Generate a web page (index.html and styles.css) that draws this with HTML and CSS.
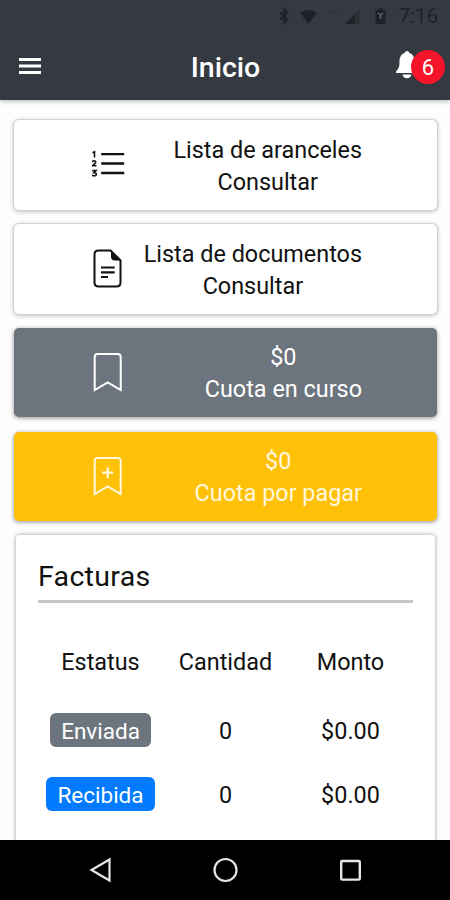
FILE: index.html
```html
<!DOCTYPE html>
<html lang="es">
<head>
<meta charset="utf-8">
<title>Inicio</title>
<link rel="stylesheet" href="styles.css">
</head>
<body>
<header class="header">
  <div class="status">
    <svg class="status-icons" width="110" height="24" viewBox="0 0 110 24">
      <path d="M2 8L9.500 15.500 6 19V5l3.500 3.500L2 16" fill="none" stroke="#1e2228" stroke-width="1.800"/>
      <path d="M22 9q9-6 17 0l-8.500 11z" fill="#1e2228"/>
      <path d="M51 8h8" stroke="#303339" stroke-width="2"/>
      <path d="M82 5v15H67z" fill="#2c3035"/><path d="M77 10v10H67z" fill="#1e2228"/>
      <path d="M97.500 6h3V4h4v2h3v14h-10z" fill="#1e2228"/>
      <path d="M100 9l2.500 2L105 9M102.500 11v4" fill="none" stroke="#59606a" stroke-width="1.500"/>
    </svg>
    <span class="clock">7:16</span>
  </div>
  <div class="toolbar">
    <svg class="menu" width="22" height="18" viewBox="0 0 22 18"><path d="M0 2.500h22M0 9h22M0 15.500h22" stroke="#fff" stroke-width="3.200"/></svg>
    <h1 class="title">Inicio</h1>
    <div class="alerts">
      <svg width="24" height="30" viewBox="0 0 24 30"><path d="M13 1c-1.500 0-2.200 1-2.200 2C6.500 4.200 5.500 8 5.500 12c0 5-.8 6.500-3.500 9.500V23h22v-1.500C21.300 18.500 20.500 17 20.500 12c0-4-1-7.800-5.300-9 0-1-.7-2-2.200-2zM8.500 24.500h9c-.5 2.500-2.300 3.800-4.500 3.800s-4-1.300-4.500-3.800z" fill="#fff"/></svg>
      <span class="count">6</span>
    </div>
  </div>
</header>
<main class="content">
  <section class="card">
    <svg class="icon" width="36" height="40" viewBox="0 0 36 40">
      <g fill="none" stroke="#111">
        <path d="M9.200 10.200h23M9.200 19.500h23M9.200 29h23" stroke-width="2.300"/>
        <g stroke-width="1.600">
          <path d="M.5 8.800l2-1v5.700"/>
          <path d="M.3 18.200q.2-1.400 1.800-1.400c2 0 2 1.700.7 2.800L.5 21.700h4"/>
          <path d="M.3 26.600H4l-2 2.100c3.300-.2 2.700 3.100.3 3.100q-1.500 0-2.200-.9"/>
        </g>
      </g>
    </svg>
    <p class="label">Lista de aranceles<br>Consultar</p>
  </section>
  <section class="card">
    <svg class="icon" width="36" height="40" viewBox="0 0 36 40">
      <path d="M6.500 2.500h12l10 10v22q0 4-4 4h-18q-4 0-4-4v-28q0-4 4-4z" fill="none" stroke="#111" stroke-width="2"/>
      <path d="M19 2L29 12.500h-6q-4 0-4-4z" fill="#111"/>
      <path d="M9 19.500h13.700M9 24.300h13.700M9 29h7" stroke="#111" stroke-width="2.200"/>
    </svg>
    <p class="label">Lista de documentos<br>Consultar</p>
  </section>
  <section class="card card-gray">
    <svg class="icon" width="36" height="40" viewBox="0 0 36 40"><path d="M2.700 38V5q0-3 3-3h20q3 0 3 3v33l-13-7.500z" fill="none" stroke="#fff" stroke-width="2"/></svg>
    <p class="label">$0<br>Cuota en curso</p>
  </section>
  <section class="card card-yellow">
    <svg class="icon" width="36" height="40" viewBox="0 0 36 40"><path d="M2.700 38V5q0-3 3-3h20q3 0 3 3v33l-13-7.500z" fill="none" stroke="#fff8df" stroke-width="2"/><path d="M10.200 16.700h11M15.700 11.200v11" stroke="#fff8df" stroke-width="2.200"/></svg>
    <p class="label">$0<br>Cuota por pagar</p>
  </section>
  <section class="panel">
    <h2 class="heading">Facturas</h2>
    <div class="table">
      <span>Estatus</span><span>Cantidad</span><span>Monto</span>
      <span class="tag">Enviada</span><span>0</span><span>$0.00</span>
      <span class="tag tag-blue">Recibida</span><span>0</span><span>$0.00</span>
    </div>
  </section>
</main>
<nav class="nav">
  <svg width="24" height="26" viewBox="0 0 24 26"><path d="M21.500 2.500v21L3.500 13z" fill="none" stroke="#e6e6e6" stroke-width="2.200"/></svg>
  <svg width="26" height="26" viewBox="0 0 26 26"><circle cx="12.500" cy="13" r="11" fill="none" stroke="#e6e6e6" stroke-width="2.200"/></svg>
  <svg width="24" height="26" viewBox="0 0 24 26"><rect x="2.200" y="4" width="18.600" height="18.600" rx="1" fill="none" stroke="#e6e6e6" stroke-width="2.400"/></svg>
</nav>
</body>
</html>
```
FILE: styles.css
```css
* { box-sizing: border-box; }
body {
  margin: 0;
  height: 900px;
  display: flex;
  flex-direction: column;
  overflow: hidden;
  background: #fdfdfd;
  color: #111;
  font-family: Roboto, sans-serif;
  font-size: 23.400px;
}
h1, h2, p { margin: 0; }
svg { display: block; flex: none; }
.header {
  position: relative;
  flex: none;
  height: 100px;
  background: #353a42;
  box-shadow: 0 1px 5px rgba(0, 0, 0, .3);
}
.status {
  height: 34px;
  padding: 4px 12px 0 0;
  display: flex;
  justify-content: flex-end;
}
.status-icons { margin-right: 10px; }
.clock {
  font-size: 20.500px;
  line-height: 25px;
  color: #1e2228;
}
.toolbar {
  height: 66px;
  padding: 0 5px 0 19px;
  display: grid;
  grid-template-columns: 51px 1fr 51px;
  align-items: center;
}
.menu { margin-top: -2px; }
.title {
  padding-right: 13px;
  text-align: center;
  color: #fff;
  font-size: 28.500px;
  font-weight: 500;
}
.alerts {
  position: relative;
  height: 34px;
}
.count {
  position: absolute;
  right: 0;
  top: 0;
  width: 34px;
  height: 34px;
  border-radius: 50%;
  background: #f5142a;
  color: #fff;
  text-align: center;
  line-height: 36px;
  font-size: 22px;
}
.content {
  flex: 1;
  min-height: 0;
  overflow: hidden;
  padding: 20px 13px 0 14px;
  display: flex;
  flex-direction: column;
  gap: 14px;
}
.card {
  flex: none;
  height: 90px;
  padding: 0 75px 0 78px;
  display: flex;
  align-items: center;
  justify-content: space-between;
  border-radius: 5px;
  background: #fff;
  box-shadow: 0 0 0 1px #d2d2d2, 0 1px 4px 1px rgba(0, 0, 0, .22);
}
.icon { margin-top: -2px; }
.label {
  padding-top: 1px;
  text-align: center;
  line-height: 32px;
  white-space: nowrap;
}
.card-gray, .card-yellow {
  height: 89px;
  margin-bottom: 1px;
  box-shadow: 0 1px 4px rgba(0, 0, 0, .45);
}
.card-gray { background: #6c757d; color: #fff; }
.card-yellow { background: #ffc107; color: #fff8df; }
.panel {
  flex: none;
  height: 340px;
  margin: -1px 2px 0;
  padding: 20px 22px;
  border-radius: 4px;
  background: #fff;
  box-shadow: 0 0 4px rgba(0, 0, 0, .4);
}
.heading {
  height: 48px;
  border-bottom: 3px solid #c6c6c6;
  font-size: 28.500px;
  font-weight: 400;
  letter-spacing: .3px;
  line-height: 43px;
}
.table {
  padding-top: 25px;
  display: grid;
  grid-template-columns: repeat(3, 1fr);
  grid-template-rows: 67px 72px 56px;
  align-items: center;
  justify-items: center;
}
.tag {
  height: 34px;
  margin-bottom: 2px;
  padding: 0 11px;
  border-radius: 6px;
  background: #6c757d;
  color: #fff;
  font-size: 22.500px;
  line-height: 36px;
}
.tag-blue { background: #007bff; }
.nav {
  flex: none;
  height: 60px;
  padding: 0 87px 0 88px;
  display: flex;
  align-items: center;
  justify-content: space-between;
  background: #000;
}
```
